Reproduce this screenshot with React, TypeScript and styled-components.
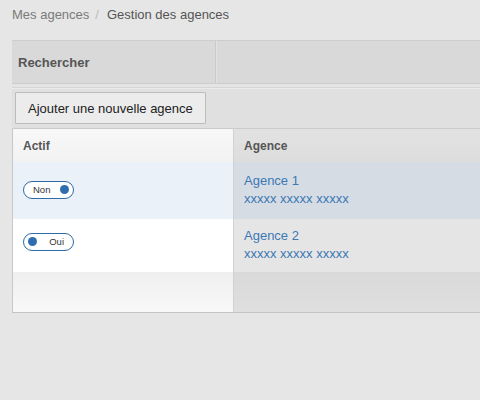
import React from "react";
import styled, { createGlobalStyle } from "styled-components";

const Global = createGlobalStyle`
  html, body { margin: 0; padding: 0; background: #e6e6e6; overflow: hidden; }
  body { font-family: "Liberation Sans", Arial, sans-serif; width: 480px; height: 400px; }
`;

const Page = styled.div`
  width: 480px;
  height: 400px;
  overflow: hidden;
`;

const Breadcrumb = styled.div`
  display: flex;
  align-items: center;
  gap: 6px;
  height: 28px;
  padding: 0 12px;
  font-size: 13px;
  color: #555;
`;

const Crumb = styled.span<{ $muted?: boolean }>`
  color: ${(p) => (p.$muted ? "#7a7a7a" : "#555")};
`;

const Sep = styled.span`
  color: #bbb;
  margin-right: 2px;
`;

const Panel = styled.div`
  margin: 12px 0 0 12px;
  width: 520px;
  display: flex;
  flex-direction: column;
`;

const SearchBar = styled.div`
  display: flex;
  height: 42px;
  background: #d9d9d9;
  border-top: 1px solid #cdcdcd;
  border-bottom: 1px solid #cdcdcd;
`;

const SearchTitle = styled.div`
  width: 204px;
  display: flex;
  align-items: center;
  padding-left: 6px;
  box-sizing: border-box;
  font-size: 13px;
  font-weight: bold;
  color: #555;
  border-right: 1px solid #cacaca;
`;

const SearchRest = styled.div`
  flex: 1;
  border-left: 1px solid #e2e2e2;
`;

const Spacer = styled.div`
  height: 3px;
  background: #e4e4e4;
  border-bottom: 1px solid #d6d6d6;
`;

const Toolbar = styled.div`
  height: 40px;
  box-sizing: border-box;
  display: flex;
  align-items: flex-start;
  padding: 3px 0 0 3px;
  background: #e0e0e0;
  border-top: 1px solid #ebebeb;
`;

const Button = styled.button`
  height: 32px;
  padding: 0 12px;
  background: #ececec;
  border: 1px solid #bcbcbc;
  border-radius: 1px;
  font-family: "Liberation Sans", Arial, sans-serif;
  font-size: 13px;
  color: #222;
`;

const Table = styled.div`
  display: flex;
  border-top: 1px solid #cccccc;
  border-bottom: 1px solid #c4c4c4;
  border-left: 1px solid #c8c8c8;
`;

const Column = styled.div<{ $side: "left" | "right" }>`
  display: flex;
  flex-direction: column;
  width: ${(p) => (p.$side === "left" ? "220px" : "auto")};
  flex: ${(p) => (p.$side === "left" ? "none" : "1")};
  border-left: ${(p) => (p.$side === "right" ? "1px solid #d2d2d2" : "none")};
`;

const HeadCell = styled.div<{ $side: "left" | "right" }>`
  height: 33px;
  display: flex;
  align-items: center;
  padding-left: 10px;
  box-sizing: border-box;
  font-size: 12px;
  font-weight: bold;
  color: #555;
  background: ${(p) =>
    p.$side === "left"
      ? "linear-gradient(#f8f8f8, #f2f2f2)"
      : "linear-gradient(#e2e2e2, #dddddd)"};
`;

const Cell = styled.div<{ $bg: string; $h: number; $pt: number }>`
  height: ${(p) => p.$h}px;
  box-sizing: border-box;
  padding: ${(p) => p.$pt}px 0 0 10px;
  background: ${(p) => p.$bg};
`;

const Filler = styled.div<{ $side: "left" | "right" }>`
  flex: none;
  height: 40px;
  background: ${(p) =>
    p.$side === "left"
      ? "linear-gradient(#efefef, #f8f8f8)"
      : "linear-gradient(#d9d9d9, #dfdfdf)"};
`;

const Toggle = styled.span<{ $on: boolean }>`
  display: inline-flex;
  flex-direction: ${(p) => (p.$on ? "row-reverse" : "row")};
  align-items: center;
  justify-content: space-between;
  width: 51px;
  height: 18px;
  box-sizing: border-box;
  padding: ${(p) => (p.$on ? "0 9px 0 4px" : "0 4px 0 9px")};
  border: 1px solid #2e6aa8;
  border-radius: 9px;
  background: #fff;
  font-size: 9.5px;
  color: #333;
`;

const Dot = styled.span`
  width: 9px;
  height: 9px;
  border-radius: 50%;
  background: #2f6eae;
`;

const Link = styled.div`
  font-size: 13px;
  color: #3c78b4;
  line-height: 18px;
`;

const Sub = styled.div`
  font-size: 13px;
  color: #3c78b4;
  line-height: 18px;
`;

const rows = [
  { name: "Agence 1", on: false, left: "#eaf1f8", right: "#d6dce4", h: 57, ptL: 17, ptR: 10 },
  { name: "Agence 2", on: true, left: "#ffffff", right: "#e5e5e5", h: 53, ptL: 13, ptR: 8 },
];

export default function App() {
  return (
    <Page>
      <Global />
      <Breadcrumb>
        <Crumb $muted>Mes agences</Crumb>
        <Sep>/</Sep>
        <Crumb>Gestion des agences</Crumb>
      </Breadcrumb>
      <Panel>
        <SearchBar>
          <SearchTitle>Rechercher</SearchTitle>
          <SearchRest />
        </SearchBar>
        <Spacer />
        <Toolbar>
          <Button>Ajouter une nouvelle agence</Button>
        </Toolbar>
        <Table>
          <Column $side="left">
            <HeadCell $side="left">Actif</HeadCell>
            {rows.map((r) => (
              <Cell key={r.name} $bg={r.left} $h={r.h} $pt={r.ptL}>
                <Toggle $on={r.on}>
                  <span>{r.on ? "Oui" : "Non"}</span>
                  <Dot />
                </Toggle>
              </Cell>
            ))}
            <Filler $side="left" />
          </Column>
          <Column $side="right">
            <HeadCell $side="right">Agence</HeadCell>
            {rows.map((r) => (
              <Cell key={r.name} $bg={r.right} $h={r.h} $pt={r.ptR}>
                <Link>{r.name}</Link>
                <Sub>xxxxx xxxxx xxxxx</Sub>
              </Cell>
            ))}
            <Filler $side="right" />
          </Column>
        </Table>
      </Panel>
    </Page>
  );
}
